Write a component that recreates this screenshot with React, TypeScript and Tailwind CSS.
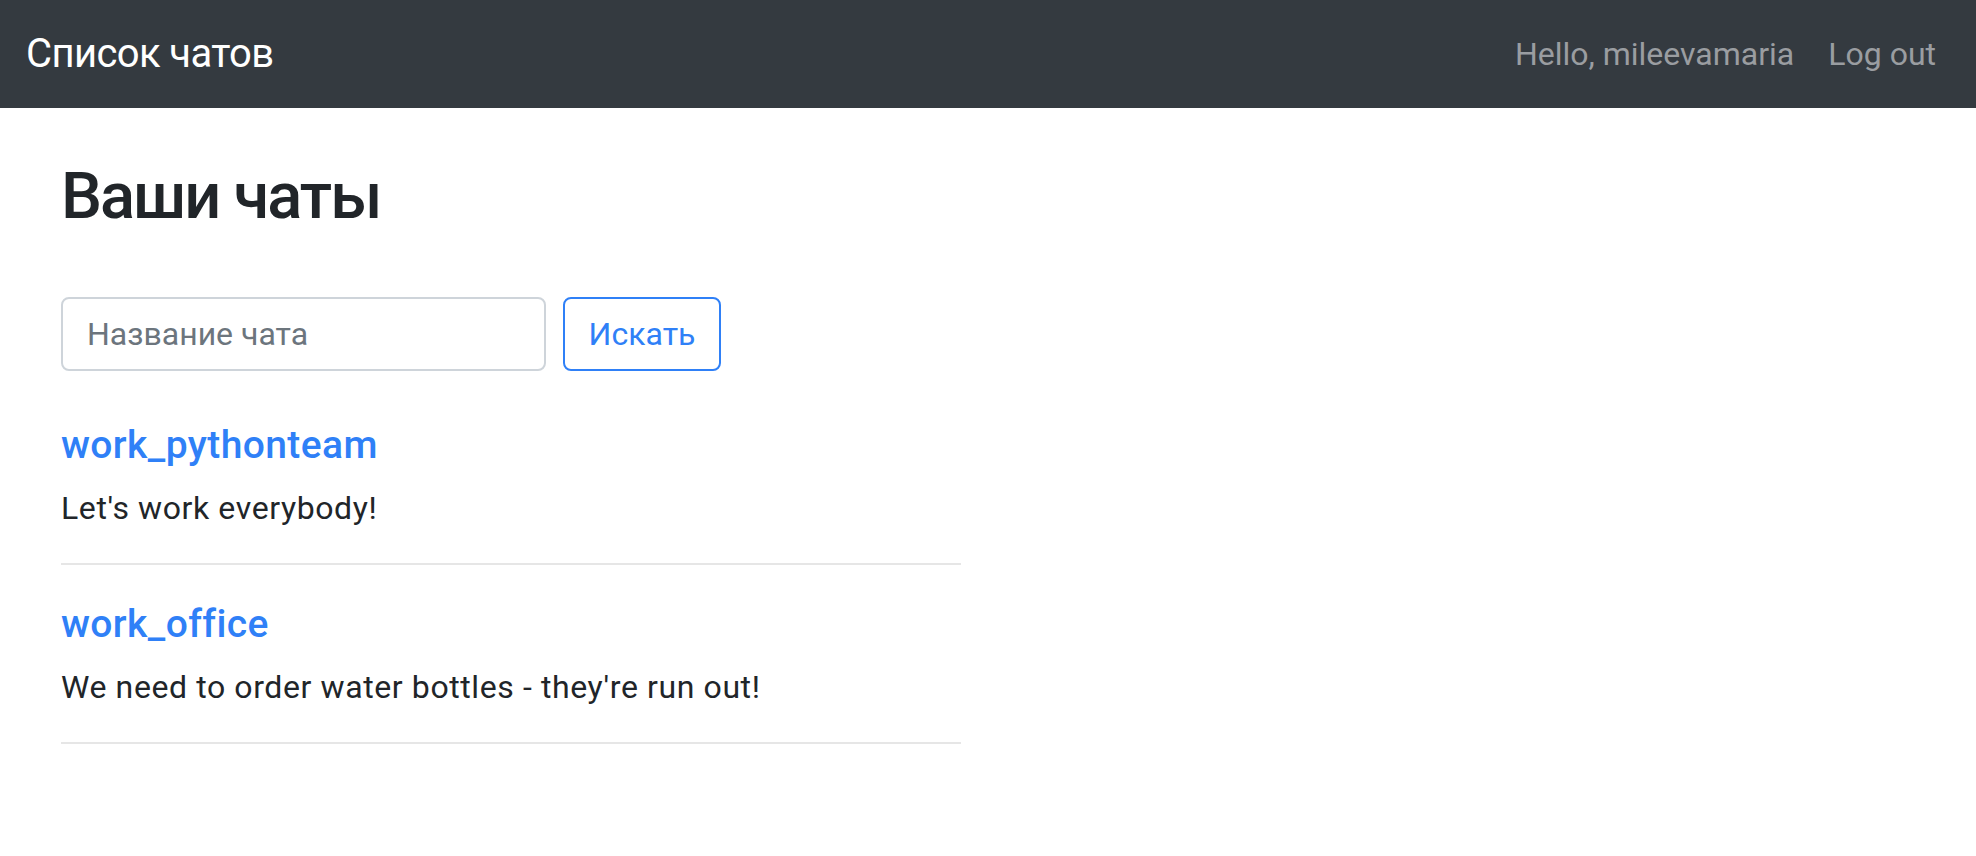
export default function App() {
  const chats = [
    { name: 'work_pythonteam', text: "Let's work everybody!" },
    { name: 'work_office', text: "We need to order water bottles - they're run out!" },
  ];

  return (
    <div className="min-h-screen bg-white font-['Roboto','Noto_Sans',sans-serif] text-[#212529]">
      <nav className="h-[108px] bg-[#343a40] flex items-center justify-between pl-[26px] pr-[40px]">
        <a href="#" className="text-[40px] leading-[48px] tracking-[-0.6px] text-white">Список чатов</a>
        <div className="flex gap-[34px] text-[32px] leading-[48px] text-[#9a9da1]">
          <span>Hello, mileevamaria</span>
          <a href="#">Log out</a>
        </div>
      </nav>

      <main className="pl-[61px]">
        <h2 className="mt-[49px] text-[65px] leading-[78px] tracking-[-2px] font-medium">Ваши чаты</h2>

        <form className="mt-[62px] mb-[15px] flex gap-[17px]" onSubmit={(e) => e.preventDefault()}>
          <input
            type="text"
            placeholder="Название чата"
            className="w-[485px] h-[74px] border-2 border-[#ced4da] rounded-[8px] px-[24px] text-[32px] placeholder:text-[#6c757d] outline-none"
          />
          <button className="w-[158px] h-[74px] border-2 border-[#2f80f7] rounded-[8px] text-[32px] text-[#2f80f7]">
            Искать
          </button>
        </form>

        <div className="w-[900px]">
          {chats.map((c) => (
            <div key={c.name} className="pt-[37px] pb-[31px] border-b-2 border-[#e6e6e6]">
              <a href="#" className="block text-[39px] leading-[44px] tracking-[0.4px] font-medium text-[#2f80f7]">{c.name}</a>
              <p className="mt-[17px] text-[32px] leading-[48px] tracking-[0.6px]">{c.text}</p>
            </div>
          ))}
        </div>
      </main>
    </div>
  );
}
